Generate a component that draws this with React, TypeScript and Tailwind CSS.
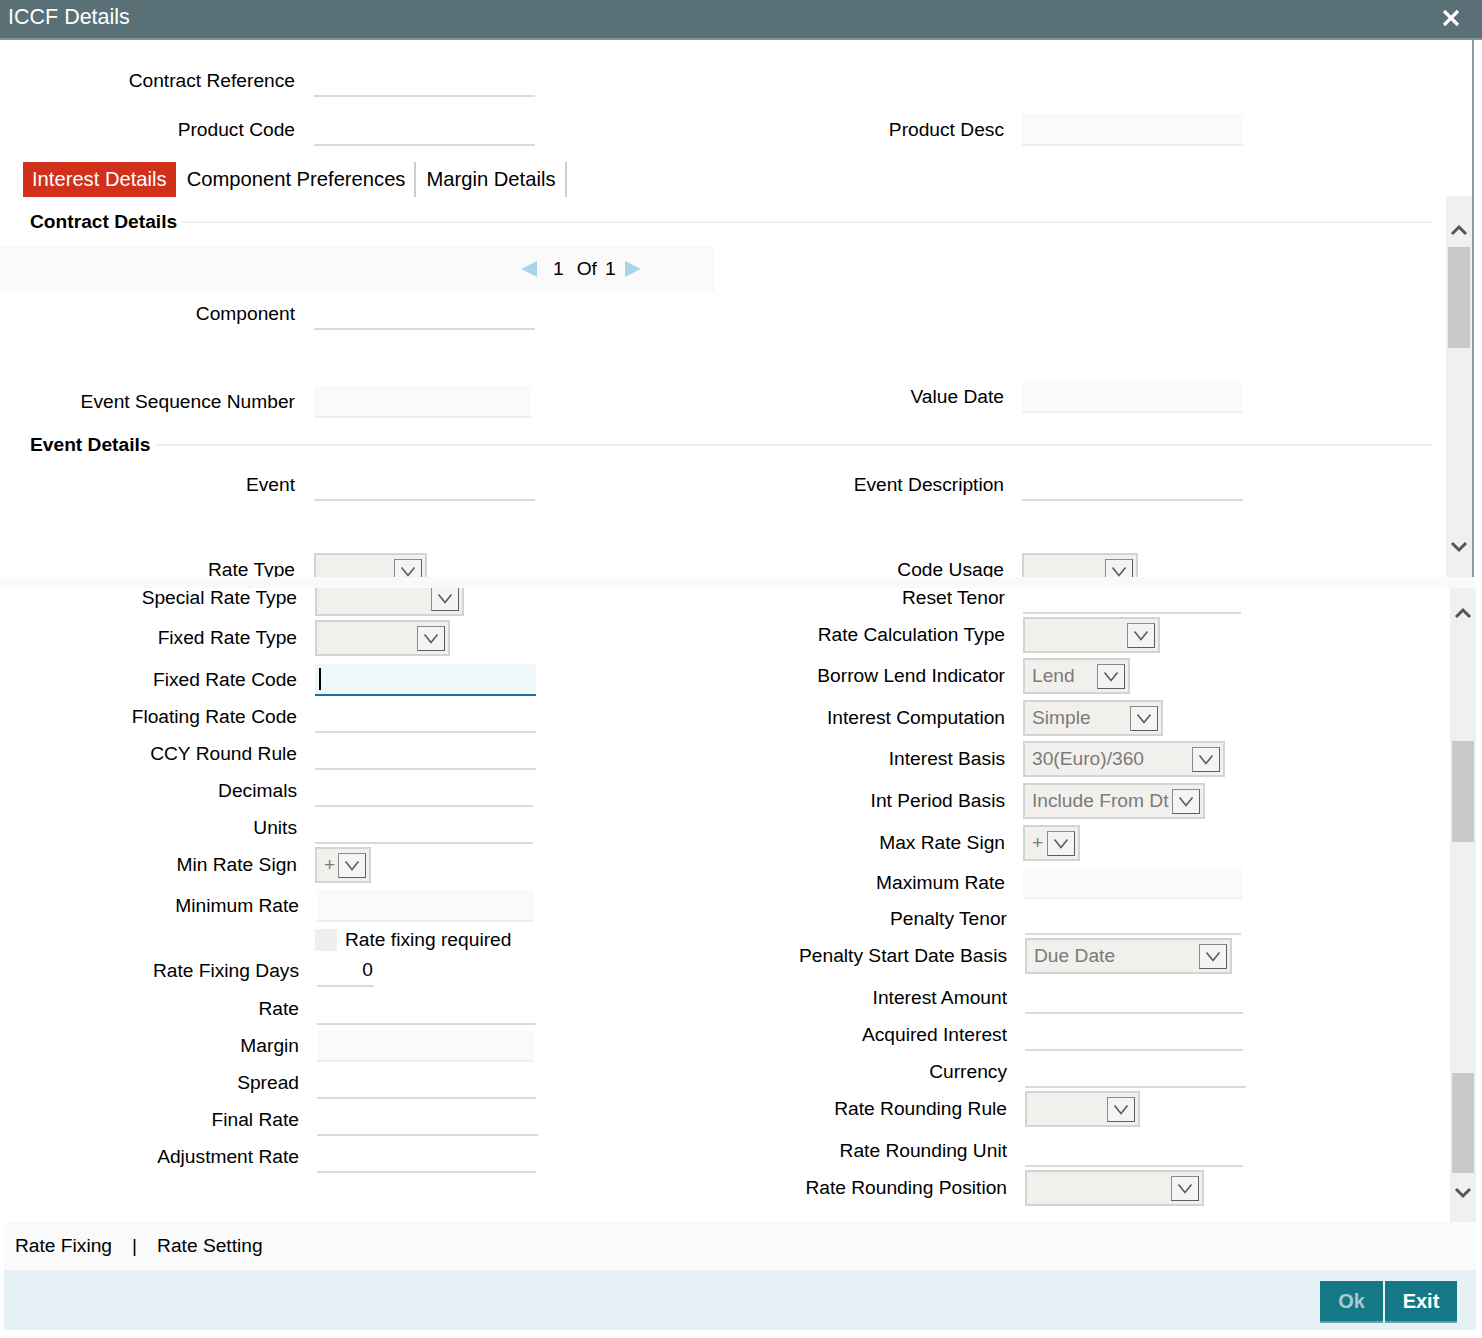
import React from 'react';

const font = "font-['Liberation_Sans',Arial,sans-serif]";

function Chevron() {
  return (
    <svg width="16" height="11" viewBox="0 0 16 11">
      <path d="M1.5 1.5 L8 9.5 L14.5 1.5" fill="none" stroke="#5a5a5a" strokeWidth="1.6" />
    </svg>
  );
}

function Select({ w, value }: { w: string; value?: string }) {
  return (
    <div className={`${w} h-[36px] border-2 border-[#d3d3d3] bg-[#f1f0ec] flex items-center justify-between pl-[7px] pr-[3px]`}>
      <span className="text-[#7b7b7b] whitespace-nowrap">{value}</span>
      <div className="w-[28px] h-[25px] shrink-0 border border-[#8a8a8a] border-r-[#5e5e5e] border-b-[#5e5e5e] bg-[#f4f4f4] flex items-center justify-center">
        <Chevron />
      </div>
    </div>
  );
}

function Line({ w }: { w: string }) {
  return <div className={`${w} h-[32px] border-b-2 border-[#dadada]`} />;
}

function Dis({ w }: { w: string }) {
  return <div className={`${w} h-[32px] bg-[#fafafa] border-b-2 border-[#f0f0f0]`} />;
}

function Field({ lw, label, children }: { lw: string; label?: string; children: React.ReactNode }) {
  return (
    <div className="flex h-[36px] items-center">
      <div className={`${lw} text-right whitespace-nowrap`}>{label}</div>
      <div className="ml-[18px]">{children}</div>
    </div>
  );
}

// each row: 36px field box sitting at the top, row height = distance to the next row
function Row({ h, children }: { h: string; children: React.ReactNode }) {
  return <div className={`${h} flex items-start`}>{children}</div>;
}

function Section({ title, className }: { title: string; className: string }) {
  return (
    <div className={`${className} h-[24px] flex items-center pl-[30px] pr-[14px]`}>
      <span className="font-bold">{title}</span>
      <div className="flex-1 ml-[4px] h-[2px] bg-[#efefef]" />
    </div>
  );
}

function ScrollChevron({ up }: { up?: boolean }) {
  return (
    <svg width="18" height="12" viewBox="0 0 18 12" className="mx-auto">
      <path d={up ? 'M2 10 L9 3 L16 10' : 'M2 2 L9 9 L16 2'} fill="none" stroke="#555" strokeWidth="3" />
    </svg>
  );
}

function Tri({ left }: { left?: boolean }) {
  return (
    <svg width="16" height="16" viewBox="0 0 16 16">
      <polygon points={left ? '16,0 16,16 0,8' : '0,0 0,16 16,8'} fill="#a7d5ea" />
    </svg>
  );
}

export default function App() {
  return (
    <div className={`${font} w-[1482px] min-h-[1338px] bg-white text-[19.2px] text-black leading-none`}>
      {/* title bar */}
      <div className="h-[40px] bg-[#587076] border-b-2 border-[#7f979c] flex items-center justify-between pl-[8px] pr-[22px] pb-[3px]">
        <span className="text-white text-[21.5px]">ICCF Details</span>
        <svg width="18" height="18" viewBox="0 0 18 18">
          <path d="M2 2 L16 16 M16 2 L2 16" stroke="white" strokeWidth="3.2" />
        </svg>
      </div>

      <div className="w-[1474px] border-r-2 border-[#8e9da1]">
        {/* header fields + tabs */}
        <div className="h-[156px] pt-[24px]">
          <div className="flex h-[34px] items-center">
            <div className="w-[295px] text-right">Contract Reference</div>
            <div className="ml-[19px]"><Line w="w-[221px]" /></div>
          </div>
          <div className="mt-[15px] flex h-[34px] items-center">
            <div className="w-[295px] text-right">Product Code</div>
            <div className="ml-[19px]"><Line w="w-[221px]" /></div>
            <div className="ml-[166px] w-[303px] text-right">Product Desc</div>
            <div className="ml-[18px]"><Dis w="w-[221px]" /></div>
          </div>
          <div className="mt-[15px] h-[35px] flex items-stretch pl-[23px] text-[20.2px]">
            <div className="bg-[#d1301b] text-white px-[9px] flex items-center">Interest Details</div>
            <div className="pl-[11px] pr-[9px] flex items-center border-r-2 border-[#cccccc]">Component Preferences</div>
            <div className="pl-[10px] pr-[9px] flex items-center border-r-2 border-[#cccccc]">Margin Details</div>
          </div>
        </div>

        {/* scroll area 1 */}
        <div className="h-[381px] flex">
          <div className="flex-1 overflow-hidden">
            <Section title="Contract Details" className="mt-[14px]" />
            <div className="mt-[12px] w-[715px] h-[46px] bg-[#fafafa] flex items-center pl-[521px]">
              <Tri left />
              <span className="ml-[16px]">1</span>
              <span className="ml-[13px]">Of</span>
              <span className="ml-[8px]">1</span>
              <span className="ml-[9px]"><Tri /></span>
            </div>
            <div className="mt-[5px] flex h-[34px] items-center">
              <div className="w-[295px] text-right">Component</div>
              <div className="ml-[19px]"><Line w="w-[221px]" /></div>
            </div>
            <div className="mt-[49px] h-[38px] flex items-start">
              <div className="mt-[5px] flex h-[34px] items-center">
                <div className="w-[295px] text-right">Event Sequence Number</div>
                <div className="ml-[19px]"><Dis w="w-[217px]" /></div>
              </div>
              <div className="ml-[170px] flex h-[34px] items-center">
                <div className="w-[303px] text-right">Value Date</div>
                <div className="ml-[18px]"><Dis w="w-[221px]" /></div>
              </div>
            </div>
            <Section title="Event Details" className="mt-[15px]" />
            <div className="mt-[11px] flex h-[34px] items-center">
              <div className="w-[295px] text-right">Event</div>
              <div className="ml-[19px]"><Line w="w-[221px]" /></div>
              <div className="ml-[166px] w-[303px] text-right">Event Description</div>
              <div className="ml-[18px]"><Line w="w-[221px]" /></div>
            </div>
            <div className="mt-[51px] flex h-[36px] items-center">
              <div className="w-[295px] text-right -mt-[2px]">Rate Type</div>
              <div className="ml-[19px]"><Select w="w-[113px]" /></div>
              <div className="ml-[274px] w-[303px] text-right -mt-[2px]">Code Usage</div>
              <div className="ml-[18px]"><Select w="w-[116px]" /></div>
            </div>
          </div>
          <div className="w-[26px] bg-[#f0f0f0] flex flex-col pt-[28px] pb-[24px]">
            <ScrollChevron up />
            <div className="mt-[11px] mx-[2px] h-[101px] bg-[#c9c9c9]" />
            <div className="flex-1" />
            <ScrollChevron />
          </div>
        </div>
      </div>

      <div className="w-[1474px] h-[11px] bg-[#f9f9f9]" />

      {/* scroll area 2 */}
      <div className="w-[1476px] h-[634px] flex">
        <div className="flex-1 overflow-hidden">
          <div className="-mt-[8px] flex">
            <div className="w-[700px] flex flex-col">
              <Row h="h-[40px]"><Field lw="w-[297px]" label="Special Rate Type"><Select w="w-[149px]" /></Field></Row>
              <Row h="h-[42px]"><Field lw="w-[297px]" label="Fixed Rate Type"><Select w="w-[135px]" /></Field></Row>
              <Row h="h-[37px]">
                <Field lw="w-[297px]" label="Fixed Rate Code">
                  <div className="w-[221px] h-[32px] bg-[#eef8fa] border-b-2 border-[#1d6fa0] flex items-center pl-[4px]">
                    <div className="w-[2px] h-[22px] bg-black" />
                  </div>
                </Field>
              </Row>
              <Row h="h-[37px]"><Field lw="w-[297px]" label="Floating Rate Code"><Line w="w-[221px]" /></Field></Row>
              <Row h="h-[37px]"><Field lw="w-[297px]" label="CCY Round Rule"><Line w="w-[221px]" /></Field></Row>
              <Row h="h-[37px]"><Field lw="w-[297px]" label="Decimals"><Line w="w-[218px]" /></Field></Row>
              <Row h="h-[37px]"><Field lw="w-[297px]" label="Units"><Line w="w-[218px]" /></Field></Row>
              <Row h="h-[41px]"><Field lw="w-[297px]" label="Min Rate Sign"><Select w="w-[56px]" value="+" /></Field></Row>
              <Row h="h-[34px]"><Field lw="w-[299px]" label="Minimum Rate"><Dis w="w-[217px]" /></Field></Row>
              <Row h="h-[31px]">
                <Field lw="w-[297px]">
                  <div className="flex items-center">
                    <div className="w-[22px] h-[22px] bg-[#efefef]" />
                    <span className="ml-[8px]">Rate fixing required</span>
                  </div>
                </Field>
              </Row>
              <Row h="h-[38px]">
                <Field lw="w-[299px]" label="Rate Fixing Days">
                  <div className="w-[57px] h-[32px] border-b-2 border-[#dadada] flex items-center justify-end pr-[1px]">0</div>
                </Field>
              </Row>
              <Row h="h-[37px]"><Field lw="w-[299px]" label="Rate"><Line w="w-[219px]" /></Field></Row>
              <Row h="h-[37px]"><Field lw="w-[299px]" label="Margin"><Dis w="w-[217px]" /></Field></Row>
              <Row h="h-[37px]"><Field lw="w-[299px]" label="Spread"><Line w="w-[219px]" /></Field></Row>
              <Row h="h-[37px]"><Field lw="w-[299px]" label="Final Rate"><Line w="w-[221px]" /></Field></Row>
              <Row h="h-[40px]"><Field lw="w-[299px]" label="Adjustment Rate"><Line w="w-[219px]" /></Field></Row>
            </div>

            <div className="flex flex-col">
              <Row h="h-[37px]"><Field lw="w-[305px]" label="Reset Tenor"><Line w="w-[218px]" /></Field></Row>
              <Row h="h-[41px]"><Field lw="w-[305px]" label="Rate Calculation Type"><Select w="w-[137px]" /></Field></Row>
              <Row h="h-[42px]"><Field lw="w-[305px]" label="Borrow Lend Indicator"><Select w="w-[107px]" value="Lend" /></Field></Row>
              <Row h="h-[41px]"><Field lw="w-[305px]" label="Interest Computation"><Select w="w-[140px]" value="Simple" /></Field></Row>
              <Row h="h-[42px]"><Field lw="w-[305px]" label="Interest Basis"><Select w="w-[202px]" value="30(Euro)/360" /></Field></Row>
              <Row h="h-[42px]"><Field lw="w-[305px]" label="Int Period Basis"><Select w="w-[182px]" value="Include From Dt" /></Field></Row>
              <Row h="h-[40px]"><Field lw="w-[305px]" label="Max Rate Sign"><Select w="w-[57px]" value="+" /></Field></Row>
              <Row h="h-[36px]"><Field lw="w-[305px]" label="Maximum Rate"><Dis w="w-[219px]" /></Field></Row>
              <Row h="h-[37px]"><Field lw="w-[307px]" label="Penalty Tenor"><Line w="w-[216px]" /></Field></Row>
              <Row h="h-[42px]"><Field lw="w-[307px]" label="Penalty Start Date Basis"><Select w="w-[207px]" value="Due Date" /></Field></Row>
              <Row h="h-[37px]"><Field lw="w-[307px]" label="Interest Amount"><Line w="w-[218px]" /></Field></Row>
              <Row h="h-[37px]"><Field lw="w-[307px]" label="Acquired Interest"><Line w="w-[218px]" /></Field></Row>
              <Row h="h-[37px]"><Field lw="w-[307px]" label="Currency"><Line w="w-[221px]" /></Field></Row>
              <Row h="h-[42px]"><Field lw="w-[307px]" label="Rate Rounding Rule"><Select w="w-[115px]" /></Field></Row>
              <Row h="h-[37px]"><Field lw="w-[307px]" label="Rate Rounding Unit"><Line w="w-[218px]" /></Field></Row>
              <Row h="h-[36px]"><Field lw="w-[307px]" label="Rate Rounding Position"><Select w="w-[179px]" /></Field></Row>
            </div>
          </div>
        </div>
        <div className="w-[26px] bg-[#f0f0f0] flex flex-col pt-[19px] pb-[23px]">
          <ScrollChevron up />
          <div className="mt-[122px] mx-[2px] h-[101px] bg-[#c9c9c9]" />
          <div className="mt-[231px] mx-[2px] h-[100px] bg-[#c9c9c9]" />
          <div className="flex-1" />
          <ScrollChevron />
        </div>
      </div>

      {/* links bar */}
      <div className="ml-[4px] w-[1472px] h-[48px] bg-[#fafafa] flex items-center pl-[11px]">
        <span>Rate Fixing</span>
        <span className="mx-[20px]">|</span>
        <span>Rate Setting</span>
      </div>

      {/* button bar */}
      <div className="ml-[4px] w-[1472px] h-[60px] bg-[#e5f1f4] flex justify-end items-start pt-[11px] pr-[19px]">
        <div className="flex gap-[2px]">
          <button className="w-[63px] h-[42px] bg-[#157886] border-b-2 border-[#5ea5ad] text-[#a9cacf] font-bold text-[20px]">Ok</button>
          <button className="w-[72px] h-[42px] bg-[#157886] border-b-2 border-[#5ea5ad] text-white font-bold text-[20px]">Exit</button>
        </div>
      </div>
    </div>
  );
}
